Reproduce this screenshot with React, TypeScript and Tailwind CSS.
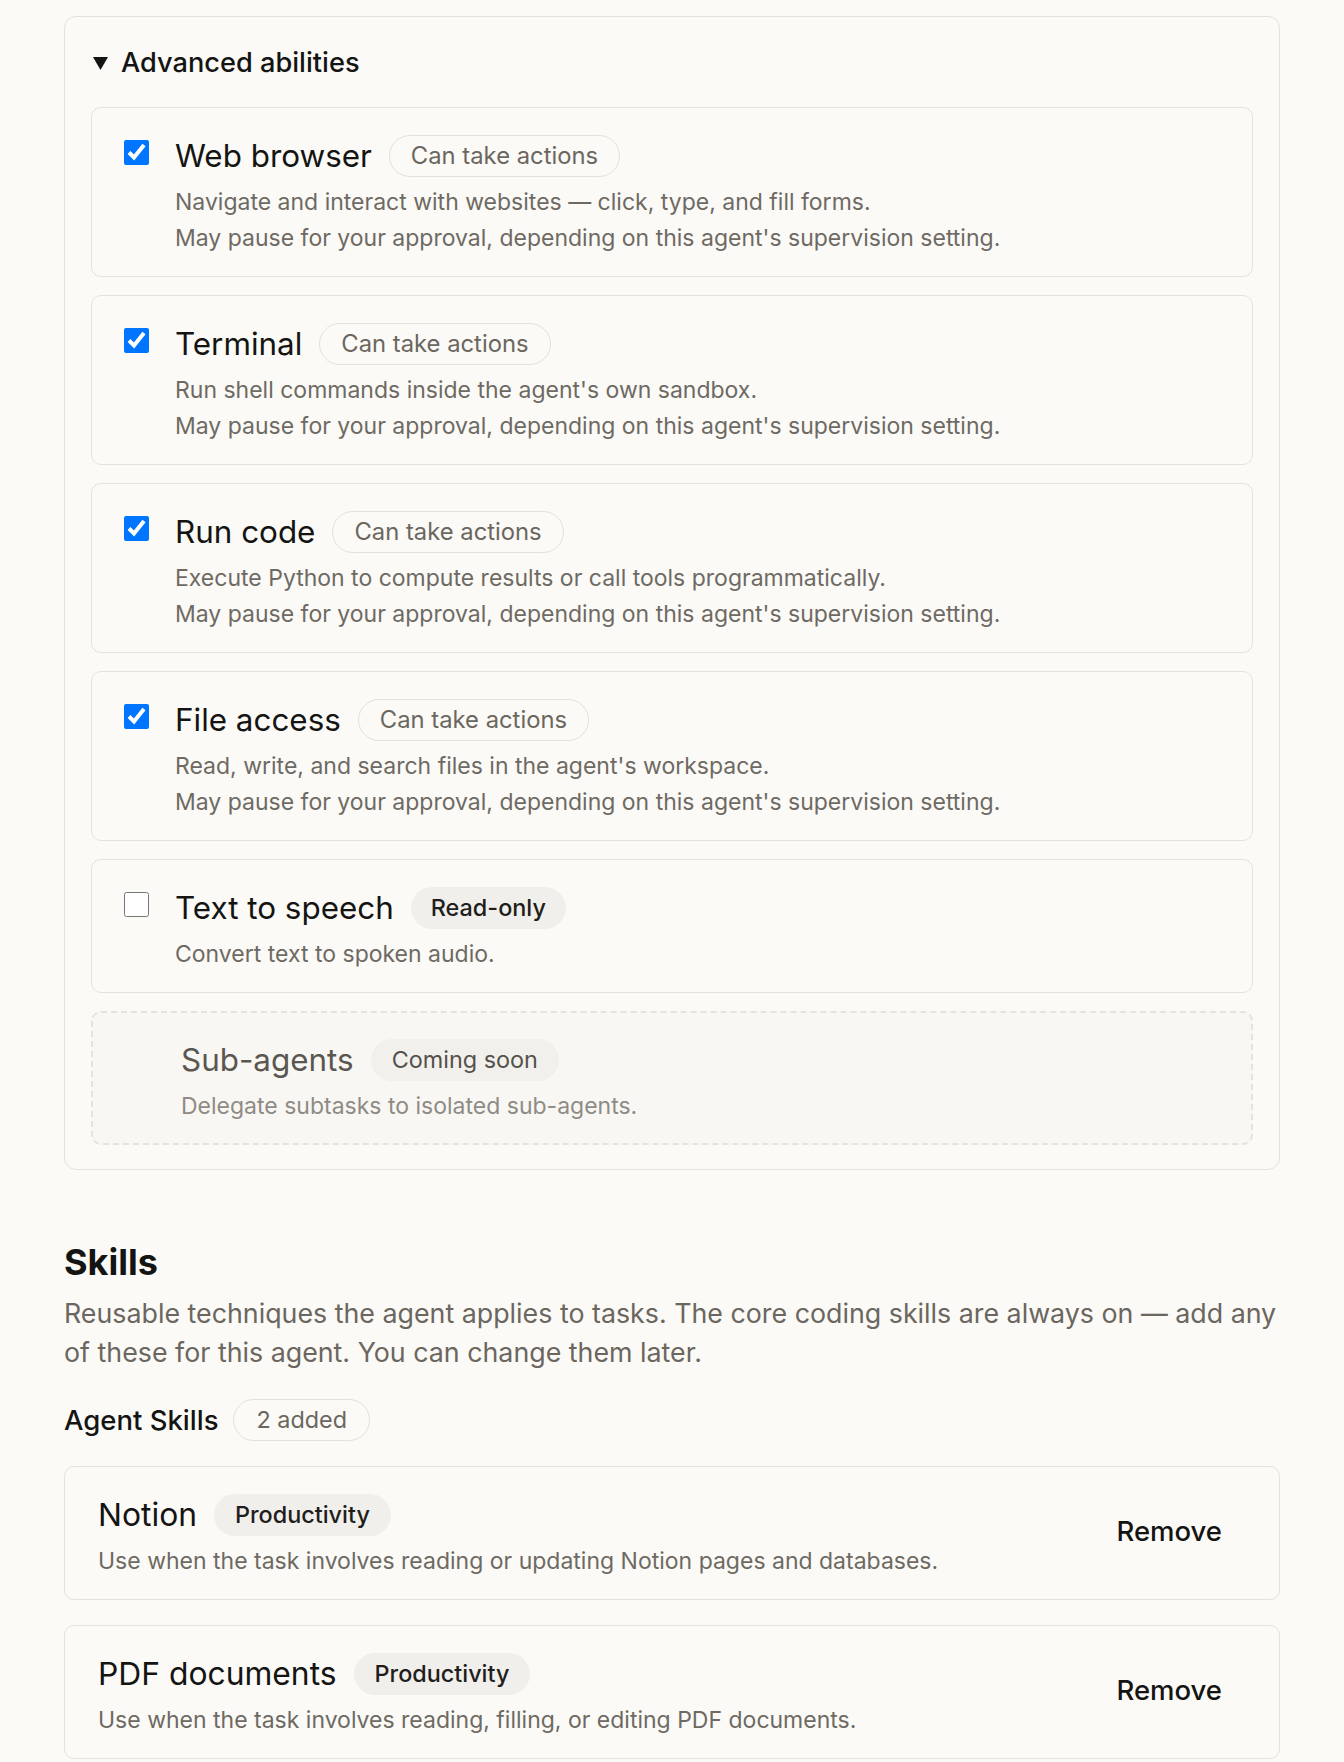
import React from 'react'

type Ability = {
  name: string
  badge: string
  kind: 'action' | 'readonly'
  checked: boolean
  lines: string[]
}

const APPROVAL = "May pause for your approval, depending on this agent's supervision setting."

const abilities: Ability[] = [
  {
    name: 'Web browser',
    badge: 'Can take actions',
    kind: 'action',
    checked: true,
    lines: ['Navigate and interact with websites — click, type, and fill forms.', APPROVAL],
  },
  {
    name: 'Terminal',
    badge: 'Can take actions',
    kind: 'action',
    checked: true,
    lines: ["Run shell commands inside the agent's own sandbox.", APPROVAL],
  },
  {
    name: 'Run code',
    badge: 'Can take actions',
    kind: 'action',
    checked: true,
    lines: ['Execute Python to compute results or call tools programmatically.', APPROVAL],
  },
  {
    name: 'File access',
    badge: 'Can take actions',
    kind: 'action',
    checked: true,
    lines: ["Read, write, and search files in the agent's workspace.", APPROVAL],
  },
  {
    name: 'Text to speech',
    badge: 'Read-only',
    kind: 'readonly',
    checked: false,
    lines: ['Convert text to spoken audio.'],
  },
]

const skills = [
  { name: 'Notion', desc: 'Use when the task involves reading or updating Notion pages and databases.' },
  { name: 'PDF documents', desc: 'Use when the task involves reading, filling, or editing PDF documents.' },
]

function AbilityCard({ a }: { a: Ability }) {
  return (
    <div className="flex gap-[26px] rounded-[10px] border border-[#e4e2dd] pl-[32px] pr-[30px] pt-[27px] pb-[20px]">
      <input
        type="checkbox"
        defaultChecked={a.checked}
        className="mt-[5px] h-[25px] w-[25px] shrink-0"
      />
      <div>
        <div className="flex h-[42px] items-center gap-[17px]">
          <span className="text-[31.4px] leading-[42px] text-[#141413]">{a.name}</span>
          {a.kind === 'action' ? (
            <span className="rounded-full border border-[#e4e1db] px-[21px] text-[23.8px] leading-[40px] text-[#6b675f]">
              {a.badge}
            </span>
          ) : (
            <span className="rounded-full bg-[#f1efeb] px-[20px] text-[23.4px] leading-[42px] font-medium text-[#1f1e1c]">
              {a.badge}
            </span>
          )}
        </div>
        <div className="mt-[7px] text-[23px] leading-[36px] text-[#6e6a63]">
          {a.lines.map((l) => (
            <p key={l}>{l}</p>
          ))}
        </div>
      </div>
    </div>
  )
}

export default function App() {
  return (
    <div
      className="min-h-screen bg-[#fbfaf7] px-[64px] pt-[16px] pb-[10px]"
      style={{ fontFamily: 'Inter, "Noto Sans", sans-serif' }}
    >
      {/* Advanced abilities */}
      <div className="rounded-[12px] border border-[#e4e2dd] px-[26px] pt-[27px] pb-[24px]">
        <div className="flex h-[38px] items-center gap-[13px] pl-[2px]">
          <svg width="15" height="13" viewBox="0 0 15 13" className="shrink-0">
            <path d="M0 0 H15 L7.5 13 Z" fill="#141413" />
          </svg>
          <span className="text-[27.2px] leading-[38px] font-medium text-[#141413]">Advanced abilities</span>
        </div>

        <div className="mt-[25px] flex flex-col gap-[18px]">
          {abilities.map((a) => (
            <AbilityCard key={a.name} a={a} />
          ))}

          <div className="rounded-[10px] border-2 border-dashed border-[#e6e3de] bg-[#f8f7f4] pl-[88px] pr-[30px] pt-[26px] pb-[19px]">
            <div className="flex h-[42px] items-center gap-[17px]">
              <span className="text-[31.4px] leading-[42px] text-[#5a5650]">Sub-agents</span>
              <span className="rounded-full bg-[#f2f0ec] px-[21px] text-[23.4px] leading-[42px] text-[#55514b]">
                Coming soon
              </span>
            </div>
            <p className="mt-[7px] text-[23px] leading-[36px] text-[#8f8b84]">
              Delegate subtasks to isolated sub-agents.
            </p>
          </div>
        </div>
      </div>

      {/* Skills */}
      <div className="mt-[71px]">
        <h2 className="text-[36px] leading-[42px] font-bold text-[#141413]">Skills</h2>
        <p className="mt-[11px] text-[26.8px] leading-[39.4px] text-[#6b665e]">
          Reusable techniques the agent applies to tasks. The core coding skills are always on — add any
          of these for this agent. You can change them later.
        </p>

        <div className="mt-[26px] flex h-[42px] items-center gap-[15px]">
          <span className="text-[27.5px] leading-[38px] font-medium text-[#141413]">Agent Skills</span>
          <span className="rounded-full border border-[#e4e1db] px-[22px] text-[23.4px] leading-[40px] text-[#6b675f]">
            2 added
          </span>
        </div>

        <div className="mt-[25px] flex flex-col gap-[25px]">
          {skills.map((s) => (
            <div
              key={s.name}
              className="flex items-center rounded-[10px] border border-[#e4e2dd] pl-[33px] pr-[33px] pt-[27px] pb-[20px]"
            >
              <div className="flex-1">
                <div className="flex h-[42px] items-center gap-[17px]">
                  <span className="text-[31.8px] leading-[42px] text-[#141413]">{s.name}</span>
                  <span className="rounded-full bg-[#f1efeb] px-[21px] text-[23.4px] leading-[42px] font-medium text-[#1f1e1c]">
                    Productivity
                  </span>
                </div>
                <p className="mt-[7px] text-[23px] leading-[36px] text-[#6e6a63]">{s.desc}</p>
              </div>
              <button className="mb-[10px] px-[24px] py-[8px] text-[27.5px] font-medium text-[#141413]">Remove</button>
            </div>
          ))}
        </div>
      </div>
    </div>
  )
}
